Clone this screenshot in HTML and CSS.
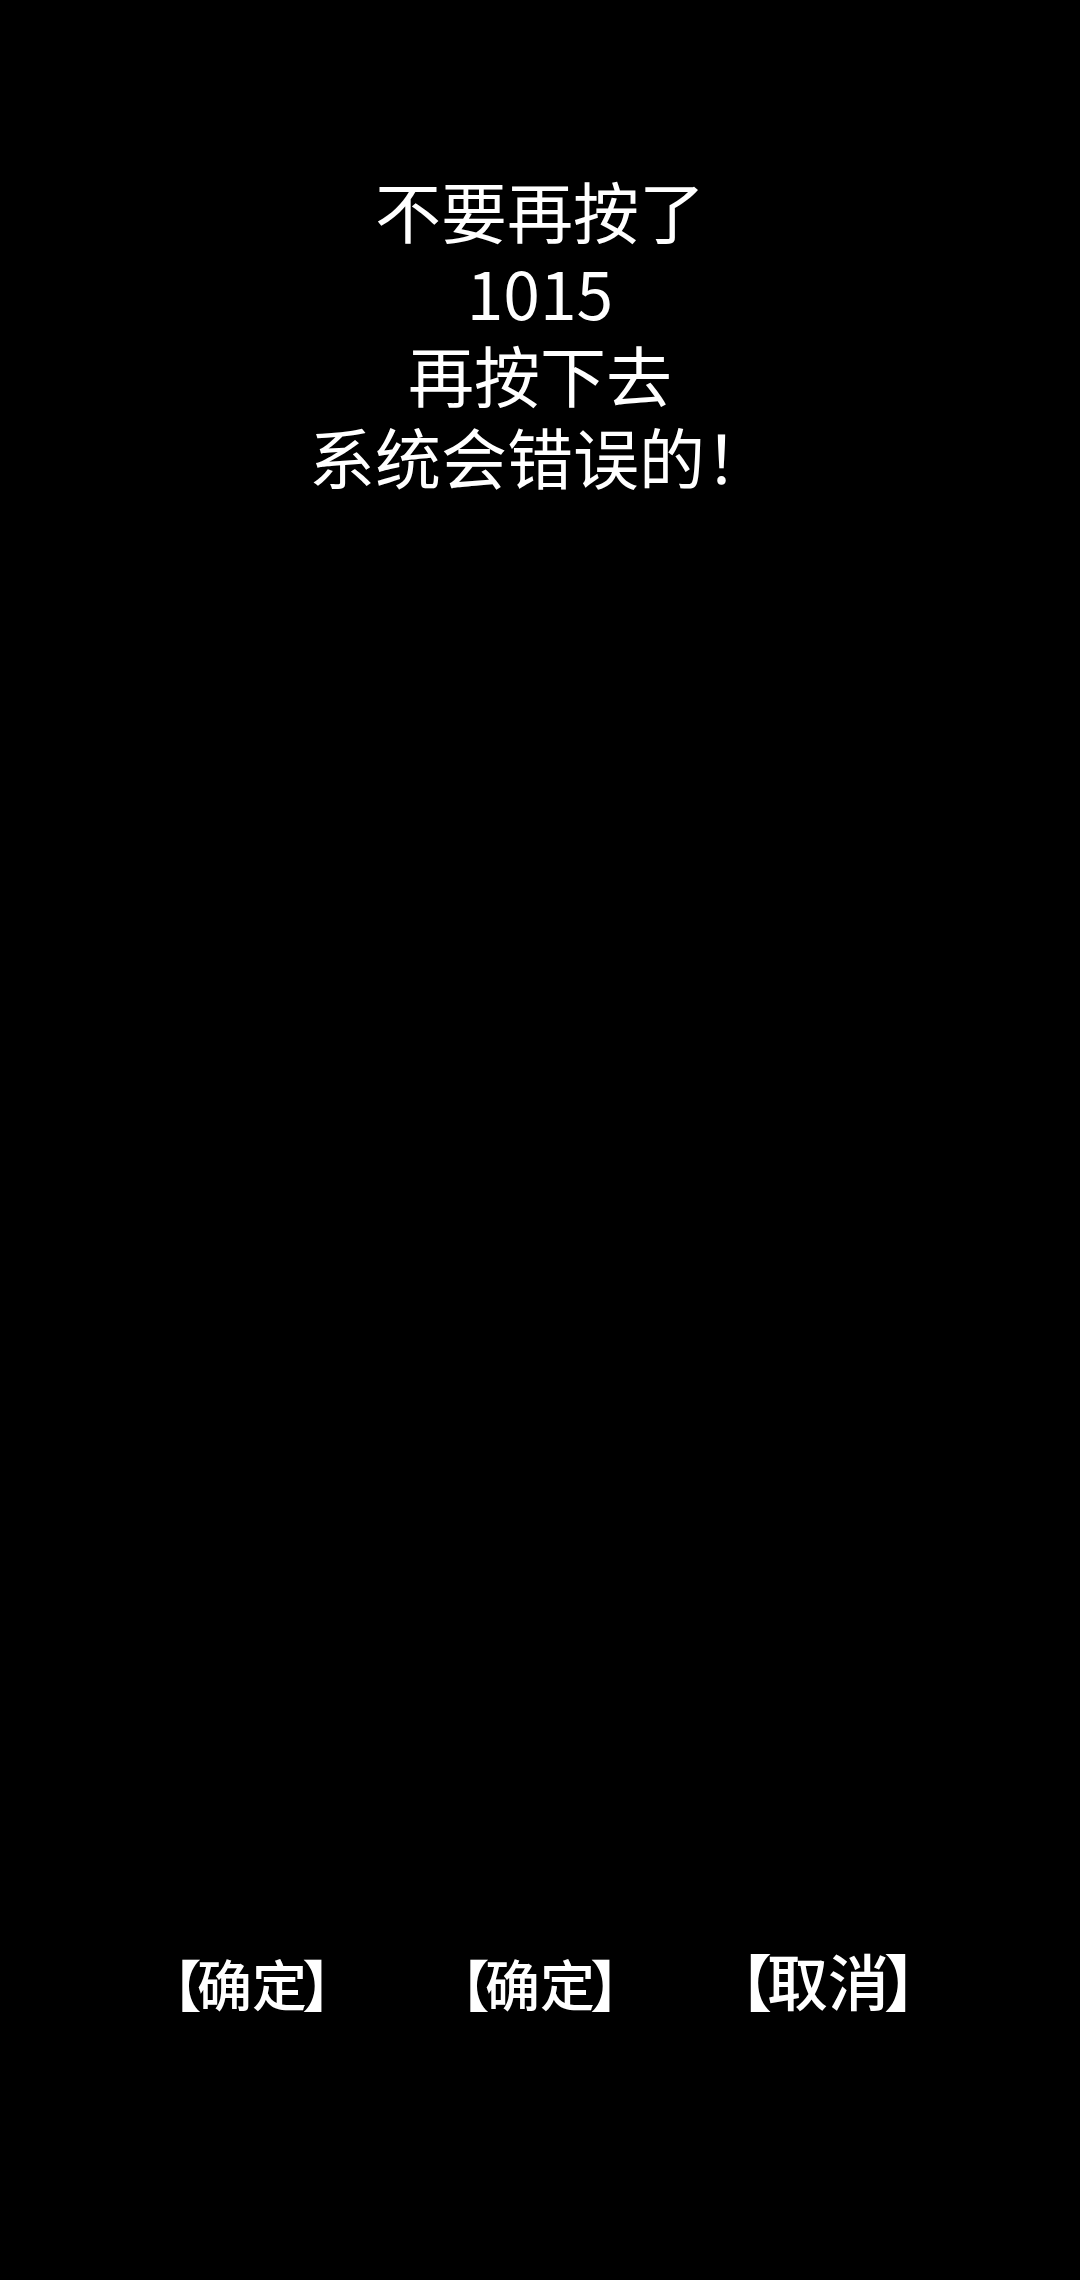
FILE: index.html
```html
<!DOCTYPE html>
<html lang="zh-CN">
<head>
<meta charset="utf-8">
<title>不要再按了</title>
<link rel="stylesheet" href="styles.css">
</head>
<body>
<main class="screen">
  <section class="message">
    <p class="line">不要再按了</p>
    <p class="line">1015</p>
    <p class="line">再按下去</p>
    <p class="line">系统会错误的！</p>
  </section>
  <nav class="actions">
    <span class="btn"><span class="br br-l">【</span>确定<span class="br br-r">】</span></span>
    <span class="btn"><span class="br br-l">【</span>确定<span class="br br-r">】</span></span>
    <span class="btn btn-cancel"><span class="br br-l">【</span>取消<span class="br br-r">】</span></span>
  </nav>
</main>
</body>
</html>
```

FILE: styles.css
```css
html, body {
  margin: 0;
  padding: 0;
  background: #000;
}

.screen {
  width: 1080px;
  height: 2280px;
  background: #000;
  color: #fff;
  font-family: "Noto Sans CJK SC", "Noto Sans", sans-serif;
  overflow: hidden;
}

.message {
  padding-top: 168px;
  text-align: center;
}

.line {
  margin: 0;
  font-size: 66px;
  line-height: 82px;
  font-weight: 400;
}

.actions {
  margin-top: 1444px;
  display: flex;
  justify-content: center;
  align-items: baseline;
}

.btn {
  width: 288px;
  text-align: center;
  font-size: 55px;
  line-height: 80px;
  font-weight: 500;
}

.btn-cancel {
  font-size: 61px;
}

.br {
  font-weight: 900;
}

.br-l {
  margin-right: -0.08em;
}

.br-r {
  margin-left: -0.08em;
}
```
